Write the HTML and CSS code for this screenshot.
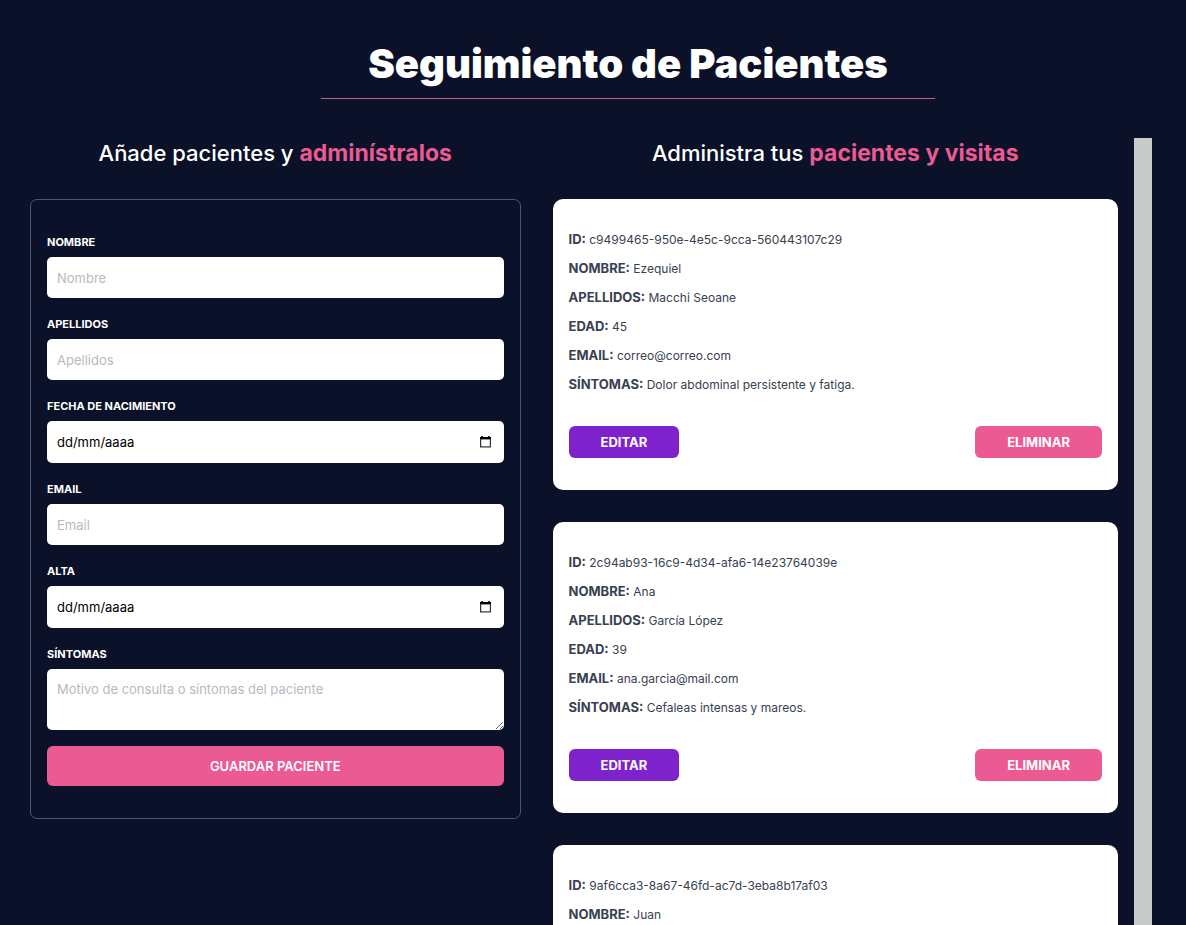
FILE: index.html
```html
<!DOCTYPE html>
<html lang="es">
<head>
<meta charset="utf-8">
<meta name="viewport" content="width=device-width, initial-scale=1">
<title>Seguimiento de Pacientes</title>
<link rel="stylesheet" href="styles.css">
</head>
<body>
<div class="page">
  <header class="header">
    <h1 class="title">Seguimiento de Pacientes</h1>
  </header>
  <main class="columns">
    <section class="column">
      <h2 class="heading">Añade pacientes y <span class="accent">adminístralos</span></h2>
      <form class="form">
        <div class="field">
          <label class="label" for="nombre">Nombre</label>
          <input class="input" id="nombre" type="text" placeholder="Nombre">
        </div>
        <div class="field">
          <label class="label" for="apellidos">Apellidos</label>
          <input class="input" id="apellidos" type="text" placeholder="Apellidos">
        </div>
        <div class="field">
          <label class="label" for="nacimiento">Fecha de nacimiento</label>
          <div class="date">
            <input class="date-input" id="nacimiento" type="text" placeholder="dd/mm/aaaa">
            <button class="date-button" type="button" aria-label="Elegir fecha de nacimiento">
              <svg width="13" height="14" viewBox="0 0 13 14"><path d="M2 1h2v1h5V1h2v1h1v10.500H1V2h1z" fill="#333"/><path d="M1 2h11v2H1z" fill="#000"/><path d="M2.200 4.500h8.600v6.800H2.200z" fill="#fff"/></svg>
            </button>
          </div>
        </div>
        <div class="field">
          <label class="label" for="email">Email</label>
          <input class="input" id="email" type="email" placeholder="Email">
        </div>
        <div class="field">
          <label class="label" for="alta">Alta</label>
          <div class="date">
            <input class="date-input" id="alta" type="text" placeholder="dd/mm/aaaa">
            <button class="date-button" type="button" aria-label="Elegir fecha de alta">
              <svg width="13" height="14" viewBox="0 0 13 14"><path d="M2 1h2v1h5V1h2v1h1v10.500H1V2h1z" fill="#333"/><path d="M1 2h11v2H1z" fill="#000"/><path d="M2.200 4.500h8.600v6.800H2.200z" fill="#fff"/></svg>
            </button>
          </div>
        </div>
        <div class="field">
          <label class="label" for="sintomas">Síntomas</label>
          <textarea class="input textarea" id="sintomas" rows="2" placeholder="Motivo de consulta o síntomas del paciente"></textarea>
        </div>
        <button class="submit" type="submit">Guardar paciente</button>
      </form>
    </section>
    <div class="panel">
      <section class="list">
        <h2 class="heading">Administra tus <span class="accent">pacientes y visitas</span></h2>
        <article class="card">
          <p class="row"><strong class="key">ID:</strong> c9499465-950e-4e5c-9cca-560443107c29</p>
          <p class="row"><strong class="key">Nombre:</strong> Ezequiel</p>
          <p class="row"><strong class="key">Apellidos:</strong> Macchi Seoane</p>
          <p class="row"><strong class="key">Edad:</strong> 45</p>
          <p class="row"><strong class="key">Email:</strong> correo@correo.com</p>
          <p class="row"><strong class="key">Síntomas:</strong> Dolor abdominal persistente y fatiga.</p>
          <div class="actions">
            <button class="action edit" type="button">Editar</button>
            <button class="action delete" type="button">Eliminar</button>
          </div>
        </article>
        <article class="card">
          <p class="row"><strong class="key">ID:</strong> 2c94ab93-16c9-4d34-afa6-14e23764039e</p>
          <p class="row"><strong class="key">Nombre:</strong> Ana</p>
          <p class="row"><strong class="key">Apellidos:</strong> García López</p>
          <p class="row"><strong class="key">Edad:</strong> 39</p>
          <p class="row"><strong class="key">Email:</strong> ana.garcia@mail.com</p>
          <p class="row"><strong class="key">Síntomas:</strong> Cefaleas intensas y mareos.</p>
          <div class="actions">
            <button class="action edit" type="button">Editar</button>
            <button class="action delete" type="button">Eliminar</button>
          </div>
        </article>
        <article class="card">
          <p class="row"><strong class="key">ID:</strong> 9af6cca3-8a67-46fd-ac7d-3eba8b17af03</p>
          <p class="row"><strong class="key">Nombre:</strong> Juan</p>
        </article>
      </section>
      <div class="track" aria-hidden="true"></div>
    </div>
  </main>
</div>
</body>
</html>
```

FILE: styles.css
```css
* {
  box-sizing: border-box;
}

body {
  margin: 0;
  background: #0a1128;
  color: #fff;
  font-family: Inter, "Liberation Sans", sans-serif;
}

h1, h2, p {
  margin: 0;
}

.page {
  display: flex;
  flex-direction: column;
  height: 100vh;
  padding: 40px 34px 0 30px;
  overflow: hidden;
}

.header {
  display: flex;
  justify-content: center;
  padding-left: 74px;
  margin-bottom: 39px;
}

.title {
  padding: 0 47px 10px;
  border-bottom: 1px solid #b45f8f;
  font-size: 40px;
  line-height: 48px;
  font-weight: 900;
}

.columns {
  display: grid;
  grid-template-columns: 9fr 11fr;
  gap: 32px;
  flex: 1;
  min-height: 0;
}

.heading {
  margin-bottom: 31px;
  font-size: 22px;
  line-height: 30px;
  font-weight: 500;
  text-align: center;
}

.accent {
  color: #eb5a92;
  font-size: 23px;
  font-weight: 700;
}

.form {
  display: flex;
  flex-direction: column;
  gap: 16px;
  padding: 32px 16px;
  border: 1px solid #4b5575;
  border-radius: 7px;
}

.field {
  display: flex;
  flex-direction: column;
  gap: 5px;
}

.label {
  font-size: 11px;
  line-height: 20px;
  font-weight: 700;
  text-transform: uppercase;
}

.input {
  width: 100%;
  height: 41px;
  padding: 10px;
  border: 0;
  border-radius: 5px;
  background: #fff;
  color: #111;
  font-family: inherit;
  font-size: 13px;
  line-height: 20px;
}

.input::placeholder {
  color: #b6babf;
}

.textarea {
  display: block;
  height: 61px;
  resize: vertical;
}

.date {
  display: flex;
  align-items: center;
  height: 42px;
  padding: 0 12px 0 10px;
  border-radius: 5px;
  background: #fff;
}

.date-input {
  flex: 1;
  min-width: 0;
  padding: 0;
  border: 0;
  background: none;
  color: #000;
  font-family: inherit;
  font-size: 13px;
  line-height: 20px;
}

.date-input::placeholder {
  color: #000;
}

.date-button {
  display: flex;
  padding: 0;
  border: 0;
  background: none;
}

.submit {
  height: 40px;
  border: 0;
  border-radius: 6px;
  background: #eb5a92;
  color: #fff;
  font-family: inherit;
  font-size: 13px;
  font-weight: 600;
  text-transform: uppercase;
}

.panel {
  display: flex;
  gap: 16px;
  min-height: 0;
}

.list {
  flex: 1;
  overflow-y: auto;
  scrollbar-width: none;
}

.track {
  width: 18px;
  background: #c8caca;
}

.card {
  display: flex;
  flex-direction: column;
  gap: 11px;
  min-height: 291px;
  margin-bottom: 32px;
  padding: 32px 16px;
  border-radius: 10px;
  background: #fff;
  color: #374151;
}

.row {
  font-size: 12px;
  line-height: 18px;
}

.key {
  font-size: 13px;
  line-height: 16px;
  font-weight: 700;
  text-transform: uppercase;
}

.actions {
  display: flex;
  justify-content: space-between;
  margin-top: 21px;
}

.action {
  height: 32px;
  padding: 0 32px;
  border: 0;
  border-radius: 6px;
  color: #fff;
  font-family: inherit;
  font-size: 13px;
  font-weight: 700;
  text-transform: uppercase;
}

.edit {
  background: #7e22ce;
}

.delete {
  background: #eb5a92;
}
```
